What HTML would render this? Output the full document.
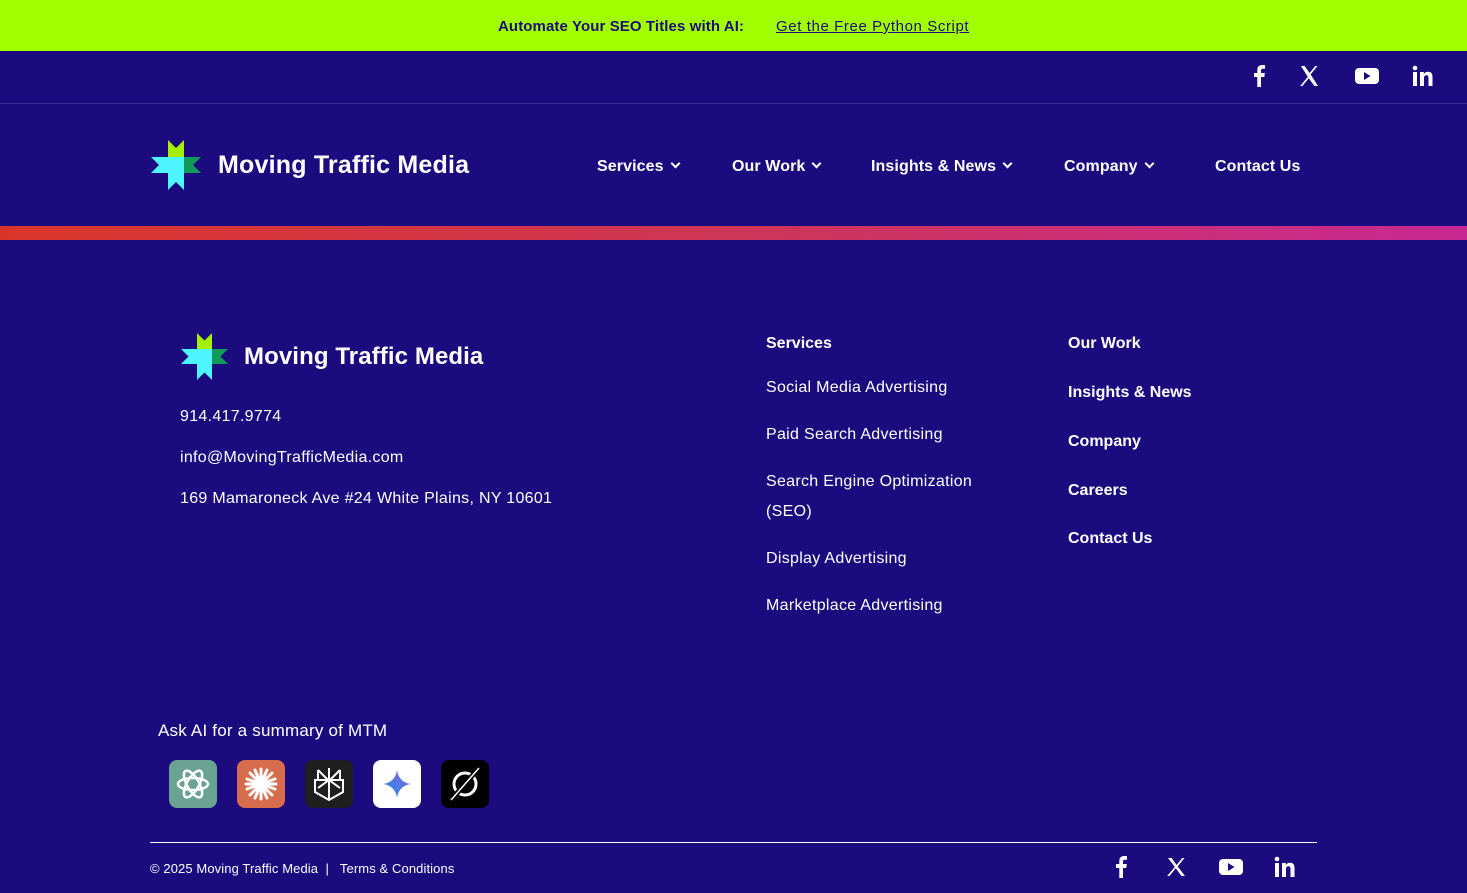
<!DOCTYPE html>
<html><head><meta charset="utf-8"><style>
*{margin:0;padding:0;box-sizing:border-box}
body{width:1467px;height:893px;background:#1c0b7f;font-family:"Liberation Sans",sans-serif;color:#fff;position:relative;overflow:hidden}
.a{position:absolute;white-space:nowrap}
.top{left:0;top:0;width:1467px;height:51px;background:#a2ff00;color:#1c0b7f;font-size:15px}
.b{font-weight:bold;font-size:16px}
.nav{font-weight:bold;font-size:16px;letter-spacing:0.1px}
.f{font-size:16px;letter-spacing:0.3px}
.chev{display:inline-block;width:7px;height:7px;border-right:2px solid #fff;border-bottom:2px solid #fff;transform:rotate(45deg);margin-left:8px;position:relative;top:-4px}
.ic{width:48px;height:48px;border-radius:8px;top:760px}
</style></head><body>
<div class="a top"></div>
<div class="a" style="left:498px;top:18px;font-size:15px;font-weight:bold;color:#1c0b7f;letter-spacing:0.1px">Automate Your SEO Titles with AI:</div>
<div class="a" style="left:776px;top:18px;font-size:15px;color:#1c0b7f;text-decoration:underline;letter-spacing:0.6px">Get the Free Python Script</div>
<div class="a" style="left:0;top:103px;width:1467px;height:1px;background:#3a2c95"></div>

<svg class="a" style="left:1250px;top:64px" width="200" height="24" viewBox="0 0 200 24" fill="#fff">
<path d="M11 23V13h3.3l.5-4H11V6.6c0-1.1.3-1.9 1.9-1.9H15V1.2C14.6 1.1 13.4 1 12.1 1 9.2 1 7.3 2.7 7.3 5.9V9H4v4h3.3v10z"/>
<path d="M51 2h3.6l5 7 5.7-7h2.2l-6.9 8.4L68 22h-3.6l-5.6-7.8L52.4 22h-2.2l7.6-9.1z" />
<rect x="105" y="4" width="24" height="16" rx="4"/><path d="M114 8v8l6.5-4z" fill="#1c0b7f"/>
<rect x="163" y="8" width="4" height="14"/><circle cx="165" cy="4" r="2.3"/><path d="M170 8h3.8v2c.8-1.4 2.3-2.3 4.2-2.3 3.3 0 4.5 2 4.5 5.3V22h-4v-8c0-1.8-.6-2.8-2.1-2.8-1.6 0-2.4 1.1-2.4 2.9V22h-4z"/>
</svg>

<svg class="a" style="left:151px;top:140px" width="50" height="50" viewBox="0 0 50 50">
<polygon points="17,0 25,8 33,0 33,17 17,17" fill="#a4f000"/>
<polygon points="0,17 17,17 17,33 0,33 8,25" fill="#4ef5ff"/>
<polygon points="33,17 50,17 42,25 50,33 33,33" fill="#139a5b"/>
<polygon points="17,33 33,33 33,50 25,42 17,50" fill="#4ef5ff"/>
<rect x="17" y="17" width="16" height="16" fill="#4ef5ff"/>
</svg>
<div class="a" style="left:218px;top:151px;font-size:25px;font-weight:bold;letter-spacing:0.2px">Moving Traffic Media</div>
<div class="a nav" style="left:597px;top:158px">Services<span class="chev"></span></div>
<div class="a nav" style="left:732px;top:158px">Our Work<span class="chev"></span></div>
<div class="a nav" style="left:871px;top:158px">Insights &amp; News<span class="chev"></span></div>
<div class="a nav" style="left:1064px;top:158px">Company<span class="chev"></span></div>
<div class="a nav" style="left:1215px;top:158px">Contact Us</div>
<div class="a" style="left:0;top:226px;width:1467px;height:14px;background:linear-gradient(90deg,#d8352a,#cf3556 50%,#c82892)"></div>

<svg class="a" style="left:181px;top:333px" width="47" height="47" viewBox="0 0 50 50">
<polygon points="17,0 25,8 33,0 33,17 17,17" fill="#a4f000"/>
<polygon points="0,17 17,17 17,33 0,33 8,25" fill="#4ef5ff"/>
<polygon points="33,17 50,17 42,25 50,33 33,33" fill="#139a5b"/>
<polygon points="17,33 33,33 33,50 25,42 17,50" fill="#4ef5ff"/>
<rect x="17" y="17" width="16" height="16" fill="#4ef5ff"/>
</svg>
<div class="a" style="left:244px;top:343px;font-size:24px;font-weight:bold;letter-spacing:0.1px">Moving Traffic Media</div>
<div class="a f" style="left:180px;top:408px">914.417.9774</div>
<div class="a f" style="left:180px;top:449px">info@MovingTrafficMedia.com</div>
<div class="a f" style="left:180px;top:490px">169 Mamaroneck Ave #24 White Plains, NY 10601</div>

<div class="a b" style="left:766px;top:335px">Services</div>
<div class="a f" style="left:766px;top:379px">Social Media Advertising</div>
<div class="a f" style="left:766px;top:426px">Paid Search Advertising</div>
<div class="a f" style="left:766px;line-height:30px;top:467px">Search Engine Optimization<br>(SEO)</div>
<div class="a f" style="left:766px;top:550px">Display Advertising</div>
<div class="a f" style="left:766px;top:597px">Marketplace Advertising</div>

<div class="a b" style="left:1068px;top:335px">Our Work</div>
<div class="a b" style="left:1068px;top:384px">Insights &amp; News</div>
<div class="a b" style="left:1068px;top:433px">Company</div>
<div class="a b" style="left:1068px;top:482px">Careers</div>
<div class="a b" style="left:1068px;top:530px">Contact Us</div>

<div class="a" style="left:158px;top:721px;font-size:17px;letter-spacing:0.2px">Ask AI for a summary of MTM</div>
<div class="a ic" style="left:169px;background:#6aa392"><svg width="48" height="48"><g fill="none" stroke="#fff" stroke-width="2.5"><ellipse cx="24" cy="24" rx="15" ry="6"/><ellipse cx="24" cy="24" rx="15" ry="6" transform="rotate(60 24 24)"/><ellipse cx="24" cy="24" rx="15" ry="6" transform="rotate(120 24 24)"/></g></svg></div>
<div class="a ic" style="left:237px;background:#d76c4c"><svg width="48" height="48"><g stroke="#fff" stroke-width="3" stroke-linecap="round"><path d="M24 9v30M9 24h30M13 13l22 22M35 13L13 35M18 10l12 28M30 10L18 38M10 19l28 10M38 19L10 29"/></g></svg></div>
<div class="a ic" style="left:305px;background:#1f1f1f"><svg width="48" height="48"><g fill="none" stroke="#fff" stroke-width="2"><path d="M24 8v32M13 10l11 11 11-11M13 10v10h22V10M10 20h28v12l-14 8-14-8zM13 28l11-8 11 8"/></g></svg></div>
<div class="a ic" style="left:373px;background:#fff"><svg width="48" height="48"><defs><linearGradient id="g" x1="0" y1="1" x2="1" y2="0"><stop offset="0" stop-color="#1a8ff0"/><stop offset="1" stop-color="#8a63d0"/></linearGradient></defs><path d="M24 10C25 18 30 23 38 24 30 25 25 30 24 38 23 30 18 25 10 24 18 23 23 18 24 10z" fill="url(#g)"/></svg></div>
<div class="a ic" style="left:441px;background:#000"><svg width="48" height="48"><circle cx="24" cy="24" r="11" fill="none" stroke="#fff" stroke-width="3"/><path d="M38 8L10 40" stroke="#000" stroke-width="5"/><path d="M38 8L10 40" stroke="#fff" stroke-width="1.5"/></svg></div>

<div class="a" style="left:150px;top:842px;width:1167px;height:1px;background:#fff"></div>
<div class="a" style="left:150px;top:861px;font-size:13px;letter-spacing:0.1px">© 2025 Moving Traffic Media &nbsp;| &nbsp; Terms &amp; Conditions</div>
<svg class="a" style="left:1112px;top:855px" width="200" height="24" viewBox="0 0 200 24" fill="#fff">
<path d="M11 23V13h3.3l.5-4H11V6.6c0-1.1.3-1.9 1.9-1.9H15V1.2C14.6 1.1 13.4 1 12.1 1 9.2 1 7.3 2.7 7.3 5.9V9H4v4h3.3v10z"/>
<path d="M56 3h3.6l5 7 5.7-7h2.2l-6.9 8.4L73 21h-3.6l-5.6-7.8L57.4 21h-2.2l7.6-9.1z"/>
<rect x="107" y="4" width="24" height="16" rx="4"/><path d="M116 8v8l6.5-4z" fill="#1c0b7f"/>
<rect x="163" y="8" width="4" height="14"/><circle cx="165" cy="4" r="2.3"/><path d="M170 8h3.8v2c.8-1.4 2.3-2.3 4.2-2.3 3.3 0 4.5 2 4.5 5.3V22h-4v-8c0-1.8-.6-2.8-2.1-2.8-1.6 0-2.4 1.1-2.4 2.9V22h-4z"/>
</svg>
</body></html>
